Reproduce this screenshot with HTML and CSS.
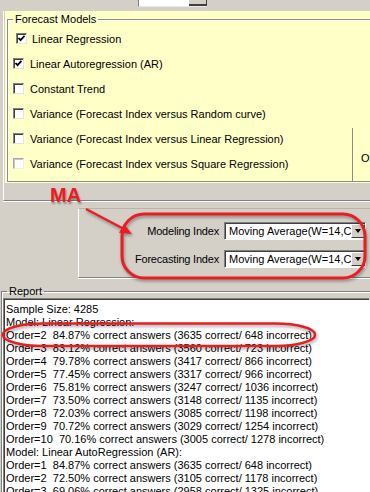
FILE: index.html
```html
<!DOCTYPE html>
<html lang="en">
<head>
    <meta charset="UTF-8">
    <meta name="viewport" content="width=device-width, initial-scale=1.0">
    <title>Forecast Models</title>
    <link rel="stylesheet" href="styles.css">
</head>
<body>
    <div class="top">
        <div class="stub"><span class="stub-btn"></span></div>
    </div>

    <div class="upper">
        <div class="models">
            <fieldset class="group">
                <legend>Forecast Models</legend>
                <div class="group-body">
                    <div class="model-list">
                        <label class="check first">
                            <span class="box"><svg width="9" height="9" viewBox="0 0 9 9"><path d="M1.5 4 L3.5 6.2 L7.5 1.8" /></svg></span>
                            Linear Regression
                        </label>
                        <label class="check">
                            <span class="box"><svg width="9" height="9" viewBox="0 0 9 9"><path d="M1.5 4 L3.5 6.2 L7.5 1.8" /></svg></span>
                            Linear Autoregression (AR)
                        </label>
                        <label class="check"><span class="box"></span>Constant Trend</label>
                        <label class="check"><span class="box"></span>Variance (Forecast Index versus Random curve)</label>
                        <label class="check"><span class="box"></span>Variance (Forecast Index versus Linear Regression)</label>
                        <label class="check"><span class="box dim"></span>Variance (Forecast Index versus Square Regression)</label>
                    </div>
                    <div class="side">O</div>
                </div>
            </fieldset>
        </div>
    </div>

    <div class="index-panel">
        <div class="index-row">
            <span class="index-label">Modeling Index</span>
            <div class="combo"><span class="combo-text">Moving Average(W=14,Close)</span><span class="combo-btn"></span></div>
        </div>
        <div class="index-row">
            <span class="index-label">Forecasting Index</span>
            <div class="combo"><span class="combo-text">Moving Average(W=14,Close)</span><span class="combo-btn"></span></div>
        </div>
    </div>

    <fieldset class="report">
        <legend>Report</legend>
        <div class="report-text">Sample Size: 4285
Model: Linear Regression:
Order=2  84.87% correct answers (3635 correct/ 648 incorrect)
Order=3  83.12% correct answers (3560 correct/ 723 incorrect)
Order=4  79.78% correct answers (3417 correct/ 866 incorrect)
Order=5  77.45% correct answers (3317 correct/ 966 incorrect)
Order=6  75.81% correct answers (3247 correct/ 1036 incorrect)
Order=7  73.50% correct answers (3148 correct/ 1135 incorrect)
Order=8  72.03% correct answers (3085 correct/ 1198 incorrect)
Order=9  70.72% correct answers (3029 correct/ 1254 incorrect)
Order=10  70.16% correct answers (3005 correct/ 1278 incorrect)
Model: Linear AutoRegression (AR):
Order=1  84.87% correct answers (3635 correct/ 648 incorrect)
Order=2  72.50% correct answers (3105 correct/ 1178 incorrect)
Order=3  69.06% correct answers (2958 correct/ 1325 incorrect)</div>
    </fieldset>

    <!-- red annotations drawn over the screenshot -->
    <span class="callout-label">MA</span>
    <svg class="callouts" width="370" height="492" viewBox="0 0 370 492">
        <g fill="none" stroke="#ec1c24">
            <rect x="122" y="214" width="243" height="64" rx="22" stroke-width="3" />
            <rect x="3" y="323.5" width="312" height="22.5" rx="40" ry="11" stroke-width="2.5" />
            <line x1="86" y1="209" x2="122" y2="228" stroke-width="2.5" />
        </g>
        <path d="M132 234 L119 232.7 L124 223.9 Z" fill="#ec1c24" />
    </svg>
</body>
</html>
```

FILE: styles.css
```css
body {
    font-family: "Liberation Sans", Arial, sans-serif;
    font-size: 11px;
    color: #000;
    background-color: #d4d0c8;
    margin: 0;
    width: 370px;
    height: 492px;
    overflow: hidden;
    position: relative;
}

/* bottom edge of a combo box cut off by the window */
.top {
    height: 11px;
}

.stub {
    display: flex;
    justify-content: flex-end;
    margin-left: 138px;
    width: 68px;
    height: 6px;
    background: #fff;
    border-left: 1px solid #808080;
    border-bottom: 1px solid #e8e8e8;
}

.stub-btn {
    width: 17px;
    background: #d4d0c8;
    border-right: 1px solid #404040;
    border-bottom: 2px solid #404040;
}

.upper {
    height: 189px;
    margin-left: 3px;
    padding-left: 1px;
    border-left: 1px solid #fff;
    border-bottom: 1px solid #808080;
    box-shadow: 0 1px 0 #fff;
}

.models {
    height: 172px;
    background: #ffffc8;
    overflow: hidden;
}

.group {
    margin: 2px 0 0 2px;
    padding: 0 0 0 5px;
    width: 420px;
    border: 1px solid #8c8c8c;
    box-shadow: inset 1px 1px 0 #fff;
}

.group legend {
    padding: 0 2px;
    line-height: 13px;
}

.group-body {
    display: flex;
}

.model-list {
    width: 339px;
    padding-bottom: 5px;
}

.check {
    display: flex;
    align-items: center;
    gap: 6px;
    height: 25px;
}

.check.first {
    margin-left: 3px;
    gap: 5px;
}

.box {
    display: flex;
    align-items: center;
    justify-content: center;
    width: 9px;
    height: 9px;
    background: #fff;
    border: 1px solid;
    border-color: #808080 #e4e4e4 #e4e4e4 #808080;
    box-shadow: inset 1px 1px 0 #404040;
}

.box.dim {
    border-color: #a8a8a8 #eee #eee #a8a8a8;
    box-shadow: inset 1px 1px 0 #c8c8c8;
}

.box svg path {
    fill: none;
    stroke: #000;
    stroke-width: 1.8;
}

.side {
    align-self: flex-end;
    height: 29px;
    padding: 24px 0 0 8px;
    border-left: 1px solid #8c8c8c;
    line-height: 13px;
}

.index-panel {
    display: flex;
    flex-direction: column;
    gap: 10px;
    margin: 7px 0 0 78px;
    padding: 13px 4px 8px 0;
    height: 47px;
    border-top: 1px solid #b8b4ac;
    border-left: 1px solid #fff;
    border-bottom: 1px solid #808080;
    box-shadow: 0 1px 0 #fff;
}

.index-row {
    display: flex;
    justify-content: flex-end;
    align-items: center;
    gap: 5px;
    height: 18px;
}

.index-label {
    letter-spacing: -0.2px;
}

.combo {
    display: flex;
    width: 139px;
    height: 14px;
    background: #fff;
    border: 1px solid;
    border-color: #808080 #fff #fff #808080;
    box-shadow: inset 1px 1px 0 #404040;
    padding: 1px 0 1px 1px;
}

.combo-text {
    flex: 1;
    overflow: hidden;
    white-space: nowrap;
    padding-left: 3px;
    line-height: 14px;
}

.combo-btn {
    position: relative;
    width: 14px;
    background: #d4d0c8;
    border: 1px solid;
    border-color: #fff #404040 #404040 #fff;
    box-sizing: border-box;
}

.combo-btn::after {
    content: "";
    position: absolute;
    left: 3px;
    top: 4px;
    border-left: 3.5px solid transparent;
    border-right: 3.5px solid transparent;
    border-top: 4px solid #000;
}

.report {
    margin: 7px 0 0 1px;
    padding: 0 0 0 1px;
    border: 1px solid #808080;
    border-right: none;
    border-bottom: none;
    box-shadow: inset 1px 1px 0 #fff;
}

.report legend {
    margin-left: 4px;
    padding: 0 2px;
    line-height: 13px;
}

.report-text {
    height: 190px;
    background: #fff;
    border: 1px solid;
    border-color: #808080 #fff #fff #808080;
    box-shadow: inset 1px 1px 0 #404040;
    padding: 4px 0 0 2px;
    white-space: pre;
    line-height: 13px;
}

.callout-label {
    position: absolute;
    left: 50px;
    top: 185px;
    font-size: 20px;
    line-height: 20px;
    font-weight: bold;
    color: #ec1c24;
    text-shadow: 1px 2px 2px rgba(0, 0, 0, 0.35);
}

.callouts {
    position: absolute;
    left: 0;
    top: 0;
    pointer-events: none;
    filter: drop-shadow(1px 2px 1.5px rgba(0, 0, 0, 0.35));
}
```
